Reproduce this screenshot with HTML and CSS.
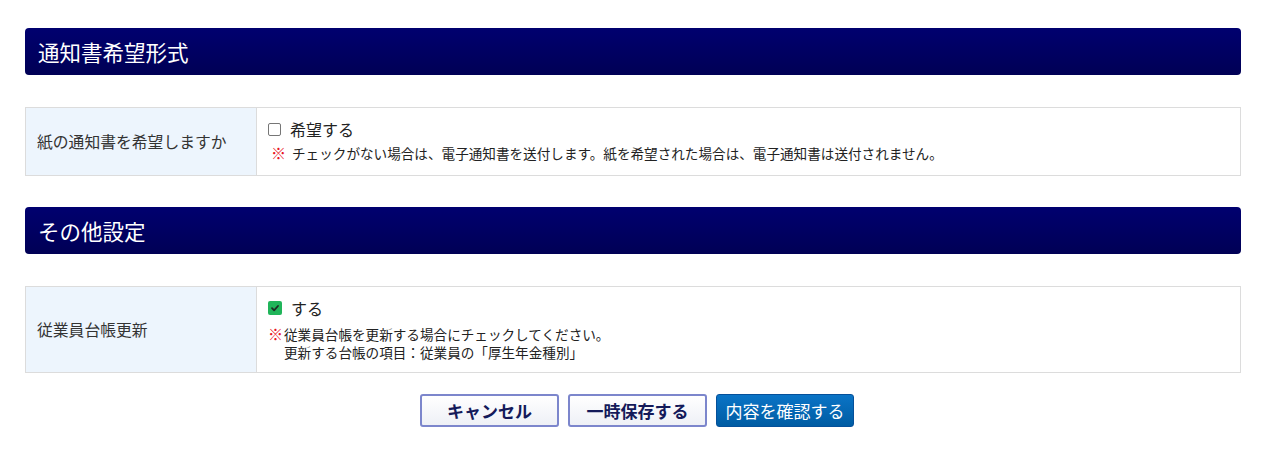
FILE: index.html
```html
<!DOCTYPE html>
<html lang="ja">
<head>
<meta charset="utf-8">
<link rel="stylesheet" href="styles.css">
</head>
<body>
<div class="page">
  <h2 class="section-title">通知書希望形式</h2>
  <div class="form-table">
    <div class="row row-paper">
      <div class="label">紙の通知書を希望しますか</div>
      <div class="field">
        <label class="check-line"><span class="box"></span><span>希望する</span></label>
        <p class="note note-one"><span class="mark">※</span>チェックがない場合は、電子通知書を送付します。紙を希望された場合は、電子通知書は送付されません。</p>
      </div>
    </div>
  </div>

  <h2 class="section-title">その他設定</h2>
  <div class="form-table">
    <div class="row row-ledger">
      <div class="label">従業員台帳更新</div>
      <div class="field">
        <label class="check-line"><span class="box checked"><svg viewBox="0 0 12 12" width="12" height="12"><path d="M3 6.2 L5.1 8.3 L9 4" fill="none" stroke="#1d2b24" stroke-width="1.8" stroke-linecap="round" stroke-linejoin="round"/></svg></span><span>する</span></label>
        <p class="note note-two"><span class="mark mark-tight">※</span><span>従業員台帳を更新する場合にチェックしてください。<br>更新する台帳の項目：従業員の「厚生年金種別」</span></p>
      </div>
    </div>
  </div>

  <div class="actions">
    <button class="btn btn-sub">キャンセル</button>
    <button class="btn btn-sub">一時保存する</button>
    <button class="btn btn-main">内容を確認する</button>
  </div>
</div>
</body>
</html>
```
FILE: styles.css
```css
* { box-sizing: border-box; }
html, body { margin: 0; padding: 0; background: #fff; }
body {
  font-family: "Noto Sans CJK JP", "Noto Sans", sans-serif;
  color: #333;
}
.page {
  width: 1216px;
  margin-left: 25px;
  padding-top: 28px;
}
.section-title {
  margin: 0;
  height: 47px;
  padding-left: 13px;
  display: flex;
  align-items: center;
  font-size: 21.5px;
  font-weight: normal;
  color: #fff;
  background: linear-gradient(#00006f, #000055);
  border-radius: 4px;
}
.form-table {
  margin-top: 32px;
  margin-bottom: 31px;
  border: 1px solid #dcdcdc;
}
.row {
  display: flex;
}
.row-paper { height: 67px; }
.row-ledger { height: 85px; }
.label {
  width: 231px;
  flex: none;
  background: #edf5fd;
  border-right: 1px solid #dcdcdc;
  display: flex;
  align-items: center;
  padding-left: 11px;
  font-size: 15.8px;
  color: #333;
}
.field {
  flex: 1;
  padding: 11px 0 0 11px;
}
.check-line {
  display: flex;
  align-items: center;
  gap: 9px;
  font-size: 16px;
  color: #222;
  height: 20px;
}
.box {
  width: 13px;
  height: 13px;
  border: 1px solid #767676;
  border-radius: 2px;
  background: #fff;
  display: flex;
  align-items: center;
  justify-content: center;
}
.box.checked {
  width: 14px;
  height: 14px;
  border: none;
  border-radius: 2px;
  background: #20b55a;
}
.note {
  margin: 0;
  font-size: 13.6px;
  color: #222;
  line-height: 18px;
  display: flex;
  align-items: flex-start;
}
.note-one { margin-top: 5px; }
.note-two { margin-top: 7px; }
.mark {
  color: #e8141e;
  font-weight: 900;
  font-size: 15px;
  line-height: 18px;
  margin-left: 3px;
  margin-right: 6px;
}
.mark-tight {
  margin-left: 0;
  margin-right: 1px;
}
.actions {
  display: flex;
  justify-content: center;
  gap: 9px;
  margin-top: -10px;
  padding-left: 8px;
}
.btn {
  width: 139px;
  height: 33px;
  font-family: inherit;
  font-size: 17px;
  border-radius: 3px;
  cursor: pointer;
  padding: 0;
}
.btn-sub {
  background: linear-gradient(#ffffff, #eef0f6);
  border: 2px solid #7c86cc;
  color: #141a5a;
  font-weight: bold;
}
.btn-main {
  width: 138px;
  background: linear-gradient(#0a74c6, #005ca3);
  border: 1px solid #05509a;
  color: #fff;
  font-weight: normal;
}
```
